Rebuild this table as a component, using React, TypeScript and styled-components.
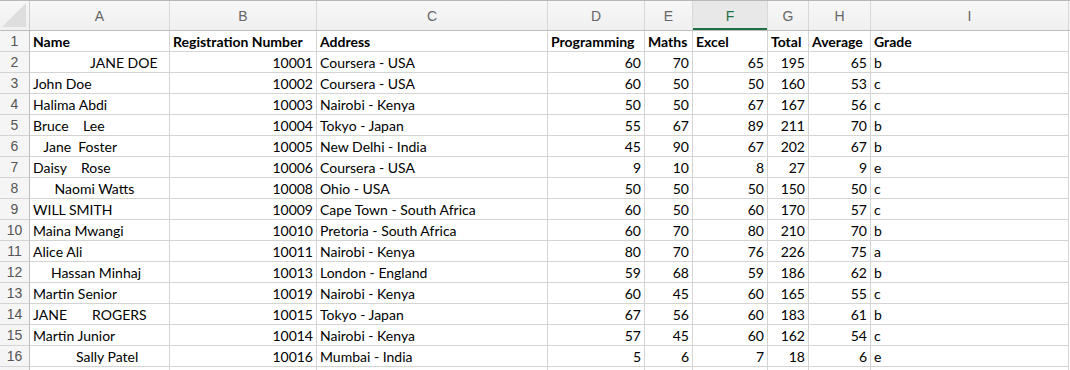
import React from 'react'
import styled, { createGlobalStyle } from 'styled-components'

const GlobalStyle = createGlobalStyle`
  html, body {
    margin: 0;
    padding: 0;
    background: #ffffff;
  }
`

const COLS = '30px 140px 147px 231px 97px 48px 75px 41px 62px 198px'
const letters = ['A', 'B', 'C', 'D', 'E', 'F', 'G', 'H', 'I']
const selected = 'F'

const headers = ['Name', 'Registration Number', 'Address', 'Programming', 'Maths', 'Excel', 'Total', 'Average', 'Grade']

type Row = [string, number, string, number, number, number, number, number, string]

const rows: Row[] = [
  ['                JANE DOE', 10001, 'Coursera - USA', 60, 70, 65, 195, 65, 'b'],
  ['John Doe', 10002, 'Coursera - USA', 60, 50, 50, 160, 53, 'c'],
  ['Halima Abdi', 10003, 'Nairobi - Kenya', 50, 50, 67, 167, 56, 'c'],
  ['Bruce    Lee', 10004, 'Tokyo - Japan', 55, 67, 89, 211, 70, 'b'],
  ['   Jane  Foster', 10005, 'New Delhi - India', 45, 90, 67, 202, 67, 'b'],
  ['Daisy    Rose', 10006, 'Coursera - USA', 9, 10, 8, 27, 9, 'e'],
  ['      Naomi Watts', 10008, 'Ohio - USA', 50, 50, 50, 150, 50, 'c'],
  ['WILL SMITH', 10009, 'Cape Town - South Africa', 60, 50, 60, 170, 57, 'c'],
  ['Maina Mwangi', 10010, 'Pretoria - South Africa', 60, 70, 80, 210, 70, 'b'],
  ['Alice Ali', 10011, 'Nairobi - Kenya', 80, 70, 76, 226, 75, 'a'],
  ['     Hassan Minhaj', 10013, 'London - England', 59, 68, 59, 186, 62, 'b'],
  ['Martin Senior', 10019, 'Nairobi - Kenya', 60, 45, 60, 165, 55, 'c'],
  ['JANE       ROGERS', 10015, 'Tokyo - Japan', 67, 56, 60, 183, 61, 'b'],
  ['Martin Junior', 10014, 'Nairobi - Kenya', 57, 45, 60, 162, 54, 'c'],
  ['            Sally Patel', 10016, 'Mumbai - India', 5, 6, 7, 18, 6, 'e'],
]

export default function App() {
  return (
    <>
      <GlobalStyle />
      <Sheet>
        <HeaderRow>
          <Corner>
            <CornerTriangle />
          </Corner>
          {letters.map((l) => (
            <ColHead key={l} $active={l === selected}>{l}</ColHead>
          ))}
        </HeaderRow>
        <Row>
          <RowNum>1</RowNum>
          {headers.map((h) => (
            <Cell key={h} $bold>{h}</Cell>
          ))}
        </Row>
        {rows.map((r, i) => (
          <Row key={i}>
            <RowNum>{i + 2}</RowNum>
            <Cell>{r[0]}</Cell>
            <Cell $num>{r[1]}</Cell>
            <Cell>{r[2]}</Cell>
            <Cell $num>{r[3]}</Cell>
            <Cell $num>{r[4]}</Cell>
            <Cell $num>{r[5]}</Cell>
            <Cell $num>{r[6]}</Cell>
            <Cell $num>{r[7]}</Cell>
            <Cell>{r[8]}</Cell>
          </Row>
        ))}
        <Row>
          <RowNum />
          {letters.map((l) => (
            <Cell key={l} />
          ))}
        </Row>
      </Sheet>
    </>
  )
}

const Sheet = styled.div`
  width: 1070px;
  height: 370px;
  overflow: hidden;
  border-top: 1px solid #b8b8b8;
  box-sizing: border-box;
  font-family: Lato, 'Open Sans', sans-serif;
  color: #000;
`

const HeaderRow = styled.div`
  display: grid;
  grid-template-columns: ${COLS};
  height: 29px;
  background: linear-gradient(#f7f7f7, #f0f0f0);
  border-bottom: 1px solid #bdbdbd;
`

const Corner = styled.div`
  position: relative;
  border-right: 1px solid #cfcfcf;
`

const CornerTriangle = styled.div`
  position: absolute;
  right: 3px;
  bottom: 3px;
  width: 0;
  height: 0;
  border-left: 24px solid transparent;
  border-bottom: 24px solid #dedede;
`

const ColHead = styled.div<{ $active?: boolean }>`
  display: flex;
  align-items: center;
  justify-content: center;
  font-family: 'Liberation Sans', Arial, sans-serif;
  font-size: 14px;
  color: ${(p) => (p.$active ? '#1e7145' : '#666')};
  border-right: 1px solid #d8d8d8;
  box-shadow: ${(p) => (p.$active ? 'inset 0 -2px 0 #1e7145' : 'none')};
  background: ${(p) => (p.$active ? '#e8e8e8' : 'transparent')};
`

const Row = styled.div`
  display: grid;
  grid-template-columns: ${COLS};
  height: 21px;
`

const RowNum = styled.div`
  display: flex;
  align-items: center;
  justify-content: center;
  font-family: 'Liberation Sans', Arial, sans-serif;
  font-size: 14px;
  color: #555;
  background: #f5f5f5;
  border-right: 1px solid #bdbdbd;
  border-bottom: 1px solid #d4d4d4;
`

const Cell = styled.div<{ $num?: boolean; $bold?: boolean }>`
  display: flex;
  align-items: center;
  justify-content: ${(p) => (p.$num ? 'flex-end' : 'flex-start')};
  padding: 0 3px;
  font-size: 14px;
  font-weight: ${(p) => (p.$bold ? 700 : 400)};
  white-space: pre;
  overflow: hidden;
  border-right: 1px solid #d4d4d4;
  border-bottom: 1px solid #d4d4d4;
`
